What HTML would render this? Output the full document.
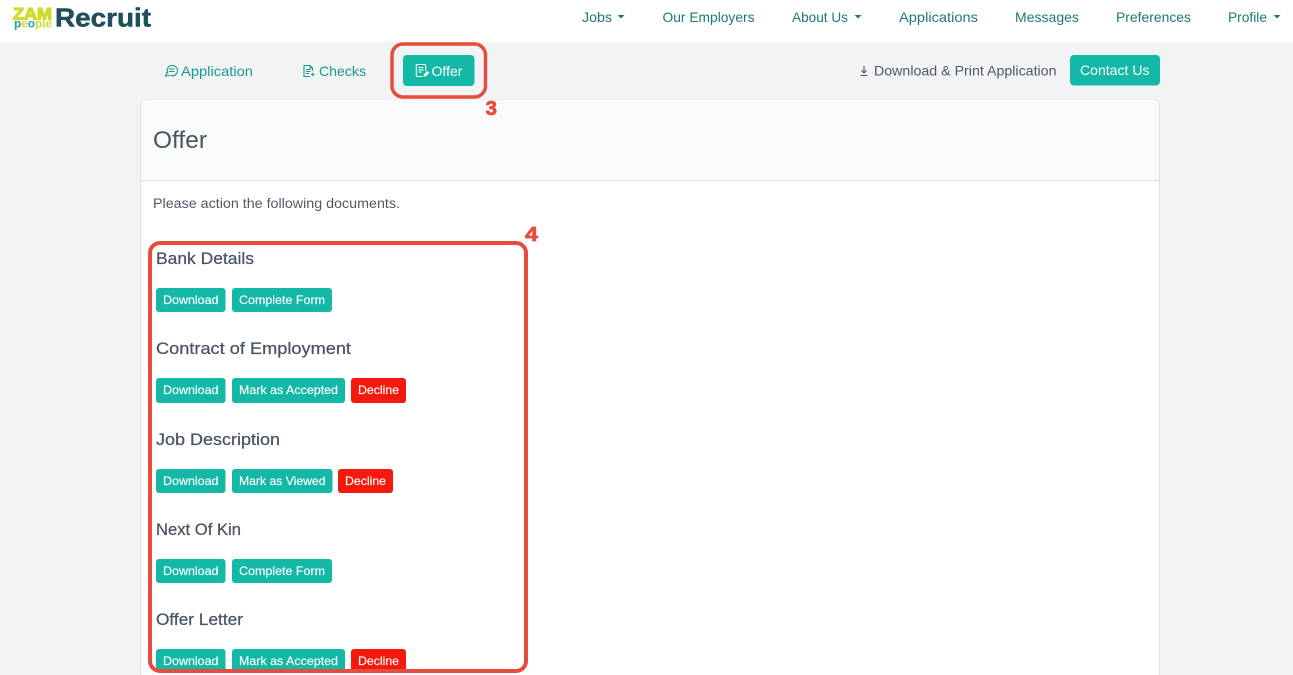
<!DOCTYPE html>
<html><head><meta charset="utf-8"><title>Offer</title>
<style>
html,body{margin:0;padding:0;background:#f2f3f5;width:1293px;height:675px;overflow:hidden}
svg{display:block;font-family:"Liberation Sans",sans-serif}
.n{font-size:14px;fill:#1c7a74}
.t{font-size:14px;fill:#1a9a8c}
.b{font-size:12px;fill:#fff;stroke:#fff;stroke-width:.15}
.h{font-size:16.500px;fill:#4a5462;stroke:#4a5462;stroke-width:.25}
.ic{fill:none;stroke-width:1.100}
</style></head><body>
<svg width="1293" height="675" viewBox="0 0 1293 675" xmlns="http://www.w3.org/2000/svg">
<rect width="1293" height="42" fill="#fff"/>
<!-- logo -->
<text x="13" y="19.500" font-size="17" font-weight="700" fill="#cfdc2b" stroke="#cfdc2b" stroke-width="1.300" textLength="39" lengthAdjust="spacingAndGlyphs">ZAM</text>
<text x="14" y="27.500" font-size="11.500" font-weight="700" fill="#cfdc2b" textLength="38" lengthAdjust="spacingAndGlyphs"><tspan fill="#1aa5a5">p</tspan>e<tspan fill="#1aa5a5">o</tspan>ple</text>
<text x="55" y="26.500" font-size="26" font-weight="700" fill="#1e4f5a" stroke="#1e4f5a" stroke-width=".5" textLength="96" lengthAdjust="spacingAndGlyphs">Recruit</text>
<!-- nav -->
<text class="n" x="582" y="22" textLength="30" lengthAdjust="spacingAndGlyphs">Jobs</text>
<path d="M617.500 15h7l-3.500 3.500z" fill="#1c7a74"/>
<text class="n" x="662.500" y="22" textLength="92" lengthAdjust="spacingAndGlyphs">Our Employers</text>
<text class="n" x="792" y="22" textLength="56" lengthAdjust="spacingAndGlyphs">About Us</text>
<path d="M854.500 15h7l-3.500 3.500z" fill="#1c7a74"/>
<text class="n" x="899" y="22" textLength="79" lengthAdjust="spacingAndGlyphs">Applications</text>
<text class="n" x="1015" y="22" textLength="64" lengthAdjust="spacingAndGlyphs">Messages</text>
<text class="n" x="1116" y="22" textLength="75" lengthAdjust="spacingAndGlyphs">Preferences</text>
<text class="n" x="1228" y="22" textLength="39" lengthAdjust="spacingAndGlyphs">Profile</text>
<path d="M1273.500 15h7l-3.500 3.500z" fill="#1c7a74"/>
<!-- tabs -->
<g class="ic" stroke="#1a9a8c">
<path d="M168 73.500a5.200 5.200 0 1 1 2.500 2h3.500a4.500 4.500 0 0 0 2-1.500"/>
<path d="M169 69h5.500M169 71.500h5.500"/>
<path d="M167.500 71.500l-2 4.500 4.500-.5"/>
<path d="M304 65.500h6l2.500 2.500v3M304 65.500v11h6M310 65.500v2.500h2.500"/>
<path d="M306 69.500h4.500M306 71.500h4.500M306 73.500h3"/>
<path d="M311 74.500h3.500M312.750 72.800v3.500"/>
</g>
<text class="t" x="181" y="76" textLength="72" lengthAdjust="spacingAndGlyphs">Application</text>
<text class="t" x="319" y="76" textLength="47" lengthAdjust="spacingAndGlyphs">Checks</text>
<rect x="403" y="55" width="71.500" height="31" rx="4" fill="#14b8a6"/>
<g class="ic" stroke="#fff" stroke-width="1.200">
<path d="M422.500 76.500h-5a1.200 1.200 0 0 1-1.200-1.200v-9.600a1.200 1.200 0 0 1 1.200-1.200h7a1.200 1.200 0 0 1 1.200 1.200v5.300"/>
<path d="M418.500 67.500h5M418.500 69.800h5M418.500 72h3"/>
</g>
<path d="M423.500 76.800l.5-2.500 3.300-3.300 2 2-3.300 3.300z" fill="#fff"/>
<text x="431.500" y="76" font-size="14" fill="#fff" textLength="31" lengthAdjust="spacingAndGlyphs">Offer</text>
<g class="ic" stroke="#4a5462">
<path d="M864 66v7M861.500 70.500l2.500 2.500 2.500-2.500M860.500 75.500h7"/>
</g>
<text x="874" y="75.500" font-size="14" fill="#4f5966" textLength="182.500" lengthAdjust="spacingAndGlyphs">Download &amp; Print Application</text>
<rect x="1070" y="55" width="90" height="30.500" rx="4" fill="#14b8a6"/>
<text x="1080" y="75" font-size="14" fill="#fff" textLength="69.500" lengthAdjust="spacingAndGlyphs">Contact Us</text>
<!-- card -->
<rect x="140.500" y="99.500" width="1019" height="600" rx="5" fill="#fff" stroke="#dfe1e6"/>
<path d="M141 180V104.500a5 5 0 0 1 5-5H1154a5 5 0 0 1 5 5V180z" fill="#f9fafa"/>
<path d="M141 180.500H1159" stroke="#dfe1e6"/>
<text x="153" y="148" font-size="24" fill="#4a5462" textLength="54" lengthAdjust="spacingAndGlyphs">Offer</text>
<text x="153" y="208" font-size="13.500" fill="#4f5966" textLength="247" lengthAdjust="spacingAndGlyphs">Please action the following documents.</text>
<!-- docs -->
<text class="h" x="156" y="264" textLength="98" lengthAdjust="spacingAndGlyphs">Bank Details</text>
<rect x="156" y="288" width="69.500" height="24" rx="3" fill="#14b8a6"/>
<text class="b" x="163" y="304" textLength="55.500" lengthAdjust="spacingAndGlyphs">Download</text>
<rect x="232" y="288" width="100" height="24" rx="3" fill="#14b8a6"/>
<text class="b" x="239" y="304" textLength="86" lengthAdjust="spacingAndGlyphs">Complete Form</text>

<text class="h" x="156" y="354" textLength="195" lengthAdjust="spacingAndGlyphs">Contract of Employment</text>
<rect x="156" y="378" width="69.500" height="25" rx="3" fill="#14b8a6"/>
<text class="b" x="163" y="394" textLength="55.500" lengthAdjust="spacingAndGlyphs">Download</text>
<rect x="232" y="378" width="113" height="25" rx="3" fill="#14b8a6"/>
<text class="b" x="239" y="394" textLength="99" lengthAdjust="spacingAndGlyphs">Mark as Accepted</text>
<rect x="351" y="378" width="55" height="25" rx="3" fill="#f4190c"/>
<text class="b" x="358" y="394" textLength="41" lengthAdjust="spacingAndGlyphs">Decline</text>

<text class="h" x="156" y="445" textLength="124" lengthAdjust="spacingAndGlyphs">Job Description</text>
<rect x="156" y="469" width="69.500" height="24" rx="3" fill="#14b8a6"/>
<text class="b" x="163" y="485" textLength="55.500" lengthAdjust="spacingAndGlyphs">Download</text>
<rect x="232" y="469" width="100.500" height="24" rx="3" fill="#14b8a6"/>
<text class="b" x="239" y="485" textLength="86.500" lengthAdjust="spacingAndGlyphs">Mark as Viewed</text>
<rect x="338" y="469" width="55" height="24" rx="3" fill="#f4190c"/>
<text class="b" x="345" y="485" textLength="41" lengthAdjust="spacingAndGlyphs">Decline</text>

<text class="h" x="156" y="535" textLength="85" lengthAdjust="spacingAndGlyphs">Next Of Kin</text>
<rect x="156" y="559" width="69.500" height="24" rx="3" fill="#14b8a6"/>
<text class="b" x="163" y="575" textLength="55.500" lengthAdjust="spacingAndGlyphs">Download</text>
<rect x="232" y="559" width="100" height="24" rx="3" fill="#14b8a6"/>
<text class="b" x="239" y="575" textLength="86" lengthAdjust="spacingAndGlyphs">Complete Form</text>

<text class="h" x="156" y="625" textLength="87" lengthAdjust="spacingAndGlyphs">Offer Letter</text>
<rect x="156" y="649" width="69.500" height="24" rx="3" fill="#14b8a6"/>
<text class="b" x="163" y="665" textLength="55.500" lengthAdjust="spacingAndGlyphs">Download</text>
<rect x="232" y="649" width="113" height="24" rx="3" fill="#14b8a6"/>
<text class="b" x="239" y="665" textLength="99" lengthAdjust="spacingAndGlyphs">Mark as Accepted</text>
<rect x="351" y="649" width="55" height="24" rx="3" fill="#f4190c"/>
<text class="b" x="358" y="665" textLength="41" lengthAdjust="spacingAndGlyphs">Decline</text>
<!-- annotations -->
<rect x="392" y="44" width="93.500" height="53" rx="11" fill="none" stroke="#e74c3c" stroke-width="3.500"/>
<text x="485.500" y="115" font-size="20" font-weight="700" fill="#e74c3c" stroke="#e74c3c" stroke-width=".7" textLength="11.500" lengthAdjust="spacingAndGlyphs">3</text>
<path d="M142 671h400v4H142z" fill="#fff"/>
<rect x="150" y="243" width="376" height="428" rx="10" fill="none" stroke="#e74c3c" stroke-width="4"/>
<text x="525" y="241" font-size="20" font-weight="700" fill="#e74c3c" stroke="#e74c3c" stroke-width=".7" textLength="13" lengthAdjust="spacingAndGlyphs">4</text>
</svg>
</body></html>
